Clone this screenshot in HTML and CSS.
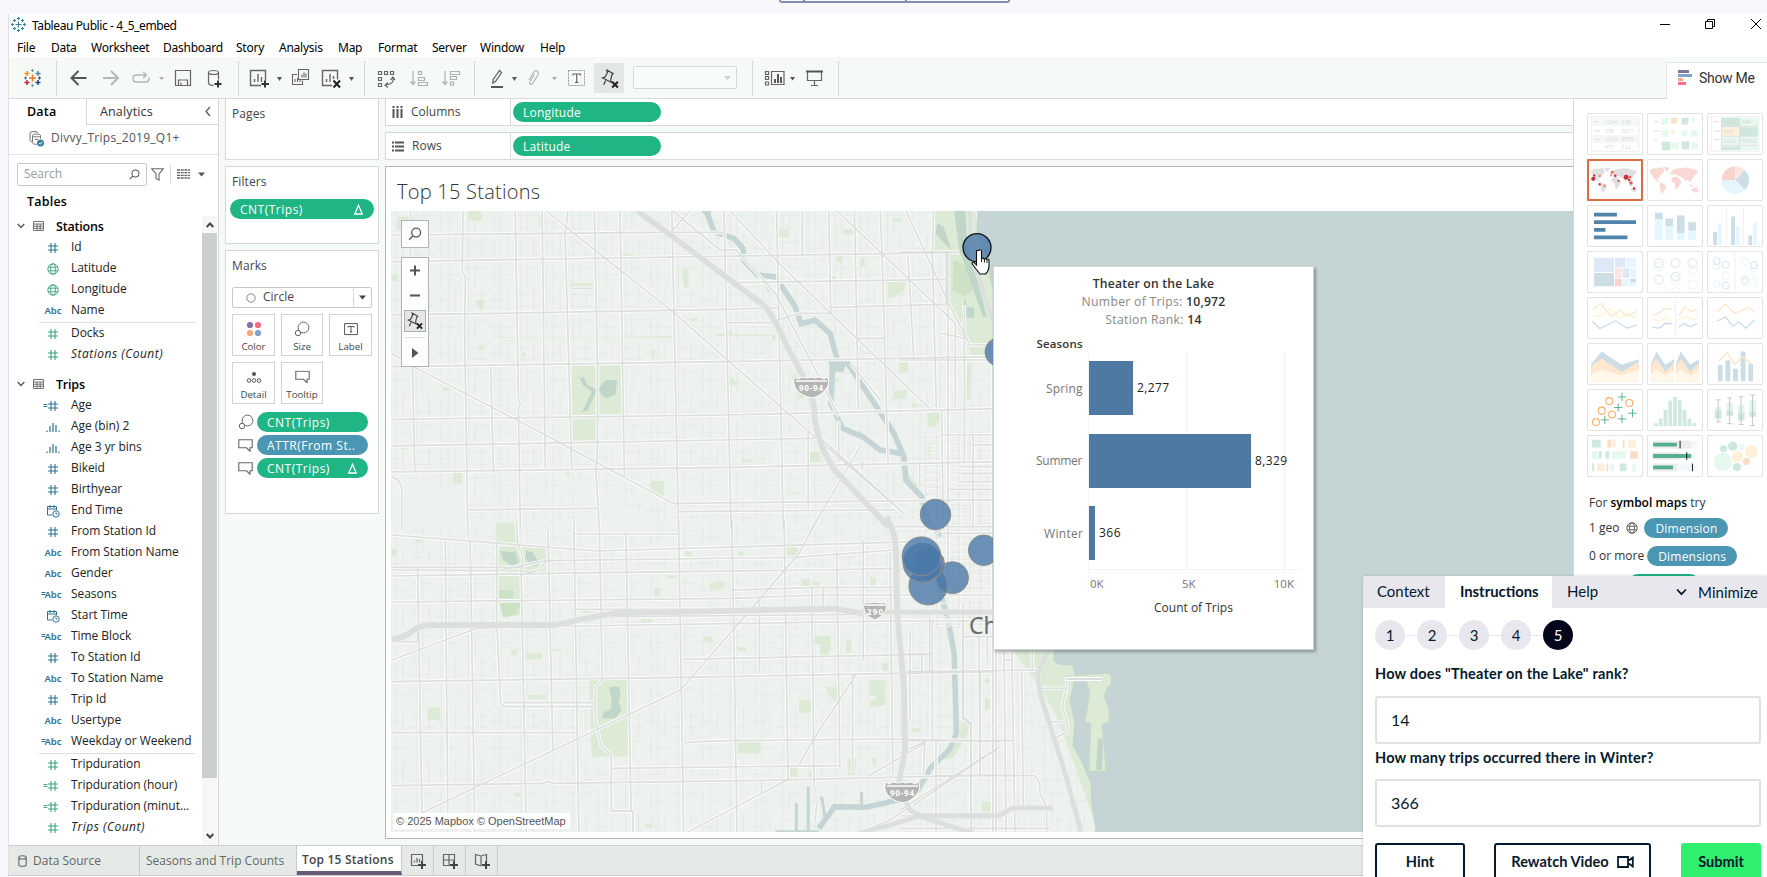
FILE: index.html
```html
<!DOCTYPE html>
<html lang="en">
<head>
<meta charset="utf-8">
<title>Tableau Public - 4_5_embed</title>
<link rel="stylesheet" href="styles.css">
</head>
<body>
<svg class="defs" width="0" height="0">
  <symbol id="hash" viewBox="0 0 12 12"><path d="M4 1v10M8 1v10M1 4h10M1 8h10" fill="none" stroke="currentColor" stroke-width="1.1"/></symbol>
  <symbol id="globe" viewBox="0 0 12 12"><g fill="none" stroke="currentColor" stroke-width=".9"><circle cx="6" cy="6" r="5.2"/><ellipse cx="6" cy="6" rx="2.4" ry="5.2"/><path d="M1 4.2h10M1 7.8h10"/></g></symbol>
  <symbol id="bin" viewBox="0 0 14 12"><path d="M1 11V9.5M4 11V5M7 11V2M10 11V4M13 11V9.5" fill="none" stroke="currentColor" stroke-width="1.2"/></symbol>
  <symbol id="cal" viewBox="0 0 14 14"><g fill="none" stroke="currentColor"><path d="M6 11H1.5V2.5h9V6M1.5 5h9M4 1v3M8 1v3"/><circle cx="10" cy="10" r="3.2"/><path d="M10 8.3V10h1.4"/></g></symbol>
  <symbol id="tbl" viewBox="0 0 11 10"><path d="M.5.5h10v9H.5zM.5 3h10M.5 5.2h10M.5 7.3h10M4 3v6.5M7.2 3v6.5" fill="none" stroke="#666" stroke-width=".9"/></symbol>
  <symbol id="chev" viewBox="0 0 8 6"><path d="M.7 1L4 4.5 7.3 1" fill="none" stroke="#555" stroke-width="1.3"/></symbol>
  <symbol id="drop" viewBox="0 0 7 5"><path d="M0 .5h7L3.500 4.500z" fill="currentColor"/></symbol>
  <symbol id="mag" viewBox="0 0 12 12"><circle cx="7" cy="4.800" r="3.800" fill="none" stroke="currentColor" stroke-width="1.1"/><path d="M4.300 7.600L1 11" stroke="currentColor" stroke-width="1.200"/></symbol>
  <symbol id="size" viewBox="0 0 16 16"><circle cx="9.500" cy="6.500" r="5.400" fill="none" stroke="#666"/><circle cx="4" cy="12" r="2.700" fill="#fff" stroke="#666"/></symbol>
  <symbol id="tip" viewBox="0 0 15 13"><path d="M.8.8h13.400v8H12v3.400L8.500 8.800H.8z" fill="none" stroke="#666" stroke-width="1.100"/></symbol>
  <symbol id="delta" viewBox="0 0 9 11"><path d="M4.500 1.200L8.200 10H.8z" fill="none" stroke="#fff" stroke-width="1.300"/></symbol>
  <symbol id="pin" viewBox="0 0 18 19"><path d="M6 1l6 3.500-1.300 1.200-1 4.500 .5 2.500L2 8.500l2.300-.8L6.500 3.500zM4.800 11L3 15" fill="none" stroke="#444" stroke-width="1.200"/><path d="M11 12l5.500 5.500M16.500 12L11 17.500" stroke="#222" stroke-width="2"/></symbol>
  <symbol id="plus" viewBox="0 0 8 8"><path d="M4 0v8M0 4h8" stroke="#444" stroke-width="2"/></symbol>
</svg>
<div class="embed-stub"><i></i><i></i><i></i></div>

<div class="window">
  <header class="titlebar">
    <svg class="logo" width="15" height="15" viewBox="0 0 15 15"><path d="M7.500 4.500v6M4.500 7.500h6M7.500 0v3M6 1.500h3M7.500 12v3M6 13.500h3M1.500 6v3M0 7.500h3M13.500 6v3M12 7.500h3M3.500 2v3M2 3.500h3M11.500 2v3M10 3.500h3M3.500 10v3M2 11.500h3M11.500 10v3M10 11.500h3" stroke="#3a7ea5" stroke-width="1.100"/></svg>
    <span class="title">Tableau Public - 4_5_embed</span>
    <svg class="winctl" width="112" height="24" viewBox="1655 14 112 24"><path d="M1660 24.500h10" stroke="#000" fill="none"/><path d="M1705.500 21.500h7v7h-7zM1707.500 21v-1.500h7v7H1713" stroke="#000" fill="none"/><path d="M1751 19l10 10M1761 19l-10 10" stroke="#000" fill="none"/></svg>
  </header>
  <nav class="menu"><span class="m1">File</span><span class="m2">Data</span><span class="m3">Worksheet</span><span class="m4">Dashboard</span><span class="m5">Story</span><span class="m6">Analysis</span><span class="m7">Map</span><span class="m8">Format</span><span class="m9">Server</span><span class="m10">Window</span><span class="m11">Help</span></nav>

  <div class="toolbar">
    <svg width="840" height="41" viewBox="9 57 840 41">
      <path d="M56.500 61v35M238.500 61v35M364.500 61v35M474.500 61v35M752.500 61v35M838.500 61v35" stroke="#d5dad7"/>
      <g stroke-width="1.500" fill="none"><path d="M32.500 74.500v7M29 78h7" stroke="#e8762c"/><path d="M27 71v5M24.500 73.500h5" stroke="#eb912c"/><path d="M38 71v5M35.500 73.500h5" stroke="#59879b"/><path d="M27 80v5M24.500 82.500h5" stroke="#c72035"/><path d="M38 80v5M35.500 82.500h5" stroke="#1f447e"/><path d="M32.500 69v3M31 70.500h3M32.500 84v3M31 85.500h3" stroke="#7199a6" stroke-width="1"/><path d="M25.500 76.500v3M24 78h3" stroke="#5b6591" stroke-width="1"/><path d="M39.500 76.500v3M38 78h3" stroke="#1f447e" stroke-width="1"/></g>
      <path d="M86.500 78H72M78.500 71l-7 7 7 7" fill="none" stroke="#555" stroke-width="2"/>
      <path d="M103 78h14.500M111 71l7 7-7 7" fill="none" stroke="#b5b9b6" stroke-width="2"/>
      <path d="M146 75h-10q-3 0-3 3.500t3 3.500h10q3 0 3-3.500v-1M143 72l3.500 3-3.500 3" fill="none" stroke="#b5b9b6" stroke-width="1.500"/>
      <path d="M159 77h5l-2.500 3z" fill="#aaa"/>
      <path d="M175.500 70.500h15v15h-15zM178.500 85v-5h9v5M181 85v-2.500" fill="none" stroke="#666" stroke-width="1.200"/>
      <path d="M208.500 72.500v11q1 2 5 2M218.500 72.500v7" fill="none" stroke="#666" stroke-width="1.200"/><ellipse cx="213.500" cy="72.500" rx="5" ry="2" fill="none" stroke="#666" stroke-width="1.200"/><path d="M218 80.500v7M214.500 84h7" stroke="#333" stroke-width="2"/>
      <path d="M261 85.500h-10.500v-15h15v10M254.500 82v-3M258 82v-8M261.500 82v-5" fill="none" stroke="#666" stroke-width="1.400"/><path d="M265 80.500v7M261.500 84h7.500" stroke="#333" stroke-width="2"/>
      <path d="M277 77h5l-2.500 4z" fill="#555"/>
      <path d="M298.500 69.500h10v10h-10zM297 74.500h-4.500v10h10v-4M302 77.500v-3M304 77.500v-5M306 77.500v-4M295 82v-3M297.500 82v-4M300 82v-2" fill="none" stroke="#666" stroke-width="1.100"/>
      <path d="M332 85.500h-9.500v-15h15v9M326.500 82v-3M330 82v-8M333.500 79v-3" fill="none" stroke="#666" stroke-width="1.400"/><path d="M333.500 80.500l6.500 7M340 80.500l-6.500 7" stroke="#222" stroke-width="2"/>
      <path d="M349 77h5l-2.500 4z" fill="#555"/>
      <path d="M378.500 71.500h3v3h-3zM384.500 71.500h3v3h-3zM390.500 71.500h3v3h-3zM378.500 77.500h3v3h-3zM378.500 83.500h3v3h-3zM393 77.500q2 6-7 7.500M390.500 80l2.500-3 2 3M388 82.500l-3 2.700 3 2.300" fill="none" stroke="#666" stroke-width="1.200"/>
      <g fill="none" stroke="#aeb2af" stroke-width="1.200"><path d="M413 71v13M410.500 81.500L413 84.500l2.500-3M418.500 71.500h3v3h-3zM418.500 77.500h6v3h-6zM418.500 82.500h9v3h-9z"/><path d="M445 71v13M442.500 81.500L445 84.500l2.500-3M450.500 71.500h9v3h-9zM450.500 76.500h6v3h-6zM450.500 82h3v3h-3z"/></g>
      <path d="M499.500 70.500l2 2-6 9-2.800 1.500.5-3.500z" fill="none" stroke="#666" stroke-width="1.300"/><path d="M491 87h12" stroke="#555" stroke-width="2"/>
      <path d="M512 77h5l-2.500 4z" fill="#555"/>
      <path d="M529 80l5-8q2-2 3.500-.5t.5 3.500l-5.500 8.500q-1.500 1.500-2.500.5t0-2.500l4.500-7" fill="none" stroke="#b5b9b6" stroke-width="1.200"/>
      <path d="M552 77h5l-2.500 3z" fill="#aaa"/>
      <rect x="568.500" y="70.500" width="16" height="15" fill="none" stroke="#999" stroke-dasharray="2 1"/><path d="M573 75.500v-1.500h7.500v1.500M576.700 74v8.500M575 82.500h3.500" stroke="#666" fill="none" stroke-width="1.200"/>
      <rect x="594" y="63" width="30" height="30" fill="#e3e8e5"/><use href="#pin" x="600" y="69" width="20" height="20"/>
      <rect x="633.500" y="66.500" width="103" height="22" rx="1" fill="#f7fbf9" stroke="#d5dad7"/><path d="M724 76h7l-3.500 4z" fill="#cfd3d0"/>
      <path d="M771.500 71.500h12.500v13h-12.500zM765.500 71.500h3v3h-3zM765.500 76.500h3v3h-3zM765.500 82h3v3h-3z" fill="none" stroke="#666" stroke-width="1.200"/><path d="M775 83v-4M778 83v-9M781 83v-6" stroke="#555" stroke-width="2"/>
      <path d="M790 77h5l-2.500 3.500z" fill="#555"/>
      <path d="M806 71.500h17" stroke="#555" stroke-width="2"/><path d="M807.500 72v8.500h14V72M814.500 81v4.500M811 85.500h7" fill="none" stroke="#666" stroke-width="1.200"/>
    </svg>
    <div class="showme-tab"><svg width="15" height="16" viewBox="0 0 15 16"><path d="M0 1.500h11" stroke="#85749a" stroke-width="3"/><path d="M0 5.500h14" stroke="#7fa3cf" stroke-width="3"/><path d="M0 9.500h5" stroke="#f9a880" stroke-width="3"/><path d="M0 13.500h8" stroke="#f87184" stroke-width="3"/></svg><span>Show Me</span></div>
  </div>

  <main class="body">
    <aside class="side">
      <div class="tabs"><b>Data</b><span>Analytics<svg width="6" height="11" viewBox="0 0 6 11"><path d="M5 1L1 5.500 5 10" fill="none" stroke="#555" stroke-width="1.200"/></svg></span></div>
      <div class="source"><svg width="17" height="17" viewBox="0 0 17 17"><path d="M2 3v7q0 1.500 2 1.800M2 3q0-1.500 4-1.500T10 3M4.500 5.500v7q0 2 4 2M4.500 5.500q0-1.500 4-1.500t4 1.500v3M4.500 5.500q0 1.500 4 1.500t4-1.500M7 9.500h3" fill="none" stroke="#777"/><circle cx="12.500" cy="13" r="3.500" fill="#3c7fa5"/><path d="M11 13l1.200 1.200 2-2.200" fill="none" stroke="#fff"/></svg><span>Divvy_Trips_2019_Q1+</span></div>
      <div class="searchrow"><div class="search"><span>Search</span><svg width="11" height="11"><use href="#mag"/></svg></div>
        <svg class="funnel" width="13" height="13" viewBox="0 0 13 13"><path d="M.8.8h11.400L8 6v6L5 10.500V6z" fill="none" stroke="#666" stroke-width="1.100"/></svg><i></i>
        <svg width="13" height="10" viewBox="0 0 13 10"><path d="M0 1h13M0 3.700h13M0 6.300h13M0 9h13" stroke="#666" stroke-dasharray="3 .7" stroke-width="1.300"/></svg><svg class="dd" width="7" height="5"><use href="#drop"/></svg></div>
      <h2>Tables</h2>
      <div class="scrollarea">
        <div class="list">
          <div class="group"><svg width="8" height="6"><use href="#chev"/></svg><svg width="11" height="10"><use href="#tbl"/></svg><b>Stations</b></div>
          <div class="f d"><i><svg width="12" height="12"><use href="#hash"/></svg></i>Id</div>
          <div class="f g"><i><svg width="12" height="12"><use href="#globe"/></svg></i>Latitude</div>
          <div class="f g"><i><svg width="12" height="12"><use href="#globe"/></svg></i>Longitude</div>
          <div class="f d"><i>Abc</i>Name</div>
          <hr>
          <div class="f g"><i><svg width="12" height="12"><use href="#hash"/></svg></i>Docks</div>
          <div class="f g"><i><svg width="12" height="12"><use href="#hash"/></svg></i><em>Stations (Count)</em></div>
          <div class="group second"><svg width="8" height="6"><use href="#chev"/></svg><svg width="11" height="10"><use href="#tbl"/></svg><b>Trips</b></div>
          <div class="f d c"><i><svg width="12" height="12"><use href="#hash"/></svg></i>Age</div>
          <div class="f d"><i><svg width="14" height="12"><use href="#bin"/></svg></i>Age (bin) 2</div>
          <div class="f d"><i><svg width="14" height="12"><use href="#bin"/></svg></i>Age 3 yr bins</div>
          <div class="f d"><i><svg width="12" height="12"><use href="#hash"/></svg></i>Bikeid</div>
          <div class="f d"><i><svg width="12" height="12"><use href="#hash"/></svg></i>Birthyear</div>
          <div class="f d"><i><svg width="14" height="14"><use href="#cal"/></svg></i>End Time</div>
          <div class="f d"><i><svg width="12" height="12"><use href="#hash"/></svg></i>From Station Id</div>
          <div class="f d"><i>Abc</i>From Station Name</div>
          <div class="f d"><i>Abc</i>Gender</div>
          <div class="f d c w"><i>Abc</i>Seasons</div>
          <div class="f d"><i><svg width="14" height="14"><use href="#cal"/></svg></i>Start Time</div>
          <div class="f d c w"><i>Abc</i>Time Block</div>
          <div class="f d"><i><svg width="12" height="12"><use href="#hash"/></svg></i>To Station Id</div>
          <div class="f d"><i>Abc</i>To Station Name</div>
          <div class="f d"><i><svg width="12" height="12"><use href="#hash"/></svg></i>Trip Id</div>
          <div class="f d"><i>Abc</i>Usertype</div>
          <div class="f d c w"><i>Abc</i>Weekday or Weekend</div>
          <hr>
          <div class="f g"><i><svg width="12" height="12"><use href="#hash"/></svg></i>Tripduration</div>
          <div class="f g c"><i><svg width="12" height="12"><use href="#hash"/></svg></i>Tripduration (hour)</div>
          <div class="f g c"><i><svg width="12" height="12"><use href="#hash"/></svg></i>Tripduration (minut...</div>
          <div class="f g"><i><svg width="12" height="12"><use href="#hash"/></svg></i><em>Trips (Count)</em></div>
        </div>
        <div class="scroll"><svg width="8" height="6" viewBox="0 0 8 6"><path d="M.7 5L4 1.500 7.300 5" fill="none" stroke="#444" stroke-width="2"/></svg><div class="thumb"></div><svg width="8" height="6" viewBox="0 0 8 6"><path d="M.7 1L4 4.500 7.300 1" fill="none" stroke="#444" stroke-width="2"/></svg></div>
      </div>
    </aside>

    <section class="cards">
      <div class="card pages"><h3>Pages</h3></div>
      <div class="card filters"><h3>Filters</h3><div class="pill green">CNT(Trips)<svg width="9" height="11"><use href="#delta"/></svg></div></div>
      <div class="card marks"><h3>Marks</h3>
        <div class="select"><svg width="10" height="10" viewBox="0 0 10 10"><circle cx="5" cy="5" r="4.200" fill="none" stroke="#888"/></svg><span>Circle</span><i><svg width="7" height="5"><use href="#drop"/></svg></i></div>
        <div class="buttons">
          <div><svg width="16" height="16" viewBox="0 0 16 16"><circle cx="4" cy="4" r="3.100" fill="#85719a"/><circle cx="12" cy="4" r="3.100" fill="#f8697f"/><circle cx="4" cy="12" r="3.100" fill="#f9a77b"/><circle cx="12" cy="12" r="3.100" fill="#7fa3cf"/></svg>Color</div>
          <div><svg width="16" height="16"><use href="#size"/></svg>Size</div>
          <div><svg width="14" height="16" viewBox="0 0 14 16"><path d="M.6 2.600h12.800v11H.600zM4 6.500V5.500h6v1M7 5.500V11M5.800 11h2.400" fill="none" stroke="#555"/></svg>Label</div>
          <div><svg width="16" height="16" viewBox="0 0 16 16"><circle cx="8" cy="5" r="2" fill="#555"/><g fill="none" stroke="#555"><circle cx="3" cy="11.500" r="1.800"/><circle cx="8" cy="11.500" r="1.800"/><circle cx="13" cy="11.500" r="1.800"/></g></svg>Detail</div>
          <div><svg width="15" height="16" viewBox="0 -1.500 15 16"><use href="#tip" width="15" height="13"/></svg>Tooltip</div>
        </div>
        <div class="mrow"><svg width="16" height="16"><use href="#size"/></svg><div class="pill green">CNT(Trips)</div></div>
        <div class="mrow"><svg width="15" height="13"><use href="#tip"/></svg><div class="pill blue">ATTR(From St..</div></div>
        <div class="mrow"><svg width="15" height="13"><use href="#tip"/></svg><div class="pill green">CNT(Trips)<svg width="9" height="11"><use href="#delta"/></svg></div></div>
      </div>
    </section>

    <section class="work">
      <div class="shelf"><label><svg width="11" height="12" viewBox="0 0 11 12"><path d="M1.500 0v2M5.500 0v2M9.500 0v2M1.500 3v9M5.500 3v9M9.500 3v9" stroke="#555" stroke-width="2"/></svg>Columns</label><div class="pill green">Longitude</div></div>
      <div class="shelf"><label><svg width="12" height="11" viewBox="0 0 12 11"><path d="M0 1.500h2M0 5.500h2M0 9.500h2M3 1.500h9M3 5.500h9M3 9.500h9" stroke="#555" stroke-width="2"/></svg>Rows</label><div class="pill green">Latitude</div></div>
      <div class="view">
        <h1>Top 15 Stations</h1>
        <div class="map">
          <svg class="mapsvg" width="1182" height="621" viewBox="391 211 1182 621">
            <defs>
              <pattern id="minor" width="52.400" height="52.600" patternUnits="userSpaceOnUse" x="383" y="209"><path d="M6 0V26M13 0V52M20 26V52M33 0V52M39.500 0V26M46 26V52M6 30V48M0 13H26M26 6H52M26 19H40M0 39H20M30 33H52M26 45H52" fill="none" stroke="#e3e9e6" stroke-width=".9"/><path d="M9 2V24M17 28V50M36 2V24M43 28V50" stroke="#f3f1f0" stroke-width="1"/></pattern>
              <pattern id="dense" width="11" height="7.200" patternUnits="userSpaceOnUse" x="925" y="436"><path d="M0 1H11M1 0V8" fill="none" stroke="#fff" stroke-width="3"/><path d="M0 1H11M1 0V8" fill="none" stroke="#dbdfdc" stroke-width="1.300"/></pattern>
              <g id="roads" fill="none" stroke-linejoin="round">
                <g transform="translate(380 190) scale(.3954 .3333)">
                  <path class="r" d="M30 135L700 127H870M30 215L1465 187M880 278L1430 268M30 374L300 370 870 358 1005 353M1140 352L1430 343M880 398H1005M30 530L870 515 1550 500M30 688L870 675 1568 656M30 768L1100 745M30 846L880 832 1568 815M220 960L550 955M740 940L1550 930M755 965L1300 960M485 295H540M1205 445H1275M1425 735H1550M1500 765H1550"/>
                  <path class="r" d="M77 62V200M82 530L88 845M210 62L208 240 216 262 214 420 222 1020M280 530L287 845M342 62L350 625 355 645 350 660 355 1020M410 62L418 835M475 62L472 100 468 125 485 835M542 62L550 520 550 780 546 840 555 1020M607 62L618 860M738 62L755 1020M870 62L888 1020M1003 62L1020 1020M1068 62V195M1135 62L1140 370M1200 62L1210 660M1265 62L1270 200 1285 815M1335 200L1350 500M1400 62L1397 190 1407 655M1432 190V345M1478 345V815M1500 735V1020M1420 660L1425 1020M1083 725V955M1160 690V815M1365 815V880M1550 500V1020M1455 400V650M1220 815V840"/>
                  <path class="r" d="M420 62L485 125 740 365 1080 720 1325 970M30 490L85 530 410 730 740 940M740 62L860 180H900L1000 310 1110 560 1160 680M885 62L1005 215 1140 370 1390 655M1155 62L1455 400M1330 62L1440 345 1490 460M1090 1020L1215 770M785 62L740 120M1005 390L1060 370H1140M1110 740L1325 970M30 860Q55 870 55 900V1020M1460 830H1550M1460 850H1550M1460 875H1550M1440 898H1550M1190 520L1265 630"/>
                </g>
                <g transform="translate(380 520) scale(.3954 .3333)">
                  <path class="r" d="M30 45L550 93 1360 65M490 42H755M30 142H360M30 150L300 152 420 122 1050 112 1300 90M30 168L550 158 1120 150 1300 145M30 246L890 235 1120 225H1550M890 210L1120 202H1300M30 485L760 472 1560 455M305 545Q305 560 325 560H540V548H315M30 638H500M770 670Q780 664 890 662L1290 657 1568 664M585 745L1160 737M30 797L410 790 425 785 440 790 1030 780 1560 765M765 418L1390 403M500 318L1300 303H1550M30 365H95L95 325M590 290L1220 283M490 268H890M360 318H500M1300 20H1550M1420 40H1550"/>
                  <path class="r" d="M95 140L107 937M165 60L172 937M228 60L240 937M295 60V300L305 545M345 0L348 70 362 115 357 150 370 937M425 30L437 690M490 0L503 937M555 30L562 480 545 500V600L560 680 585 705V873H640V937M622 40L635 870M755 0L768 937M890 0L903 937M1022 0L1032 780M1092 200L1098 800M1155 90L1163 740M1222 60V420M1290 100L1297 760M1195 462V760M965 780V820M960 235V460M1120 202V280M360 152L380 157 400 150 420 125"/>
                  <path class="r" d="M30 420L245 325 480 312M95 885L440 690 760 510 940 265 1060 100 1105 0M1205 462L1095 660 1060 735M780 935L1030 780M1235 768L1380 668M1350 855L1568 680M1340 860L1290 900 1220 935M1340 330V600M1370 400V460M1390 270V455M1475 250V590L1495 610V937M1518 455V765M1550 0V937M1100 905L1105 850"/>
                </g>
                <g transform="translate(900 580) scale(.3333)">
                  <path class="r" d="M20 275L420 270M20 482H340M110 587H400Q420 590 420 640L440 680V757M0 745H450M97 120V480M188 120V415L212 435 214 757M237 170L240 585M262 170V250M288 190V757M312 190L318 757M335 190L345 757M365 275L370 680M397 190V270M0 520L80 482M0 690L285 510M420 325H500M440 425H500M605 292H500V320L487 380 502 430V455L465 475M0 708H40M0 222H97M70 585L75 480M190 170H280M310 240H340M108 480V757"/>
                </g>
                <path class="r" d="M900 252L953 252M968 345H993M940 333L968 339M948 252V575M900 360H993"/>
              </g>
              <g id="hwy" fill="none" stroke-linejoin="round">
                <g transform="translate(380 190) scale(.3954 .3333)"><path class="h" d="M650 62L740 140 975 350Q1000 390 1030 470L1070 560Q1100 620 1100 690 1110 770 1150 840L1285 1010"/></g>
                <g transform="translate(380 520) scale(.3954 .3333)"><path class="h" d="M30 358Q60 355 80 335T130 315H440Q480 308 500 300L590 280 890 272 1150 266 1220 280M1280 -10Q1305 40 1305 90L1308 280 1325 500 1328 690 1312 790"/><path class="h h2" d="M1220 277H1560M1320 820L1340 870 1365 887H1570M1360 890L1290 915 1210 940M1360 887L1500 940"/></g>
                <path class="h h2" d="M970 211V250L980 280 993 322M1049 650L1038 672Q1037 680 1042 700L1066 776 1081 832M1053 808H1013L998 816H913"/>
              </g>
            </defs>
            <rect x="391" y="211" width="1182" height="621" fill="#edf2ef"/>
            <rect x="391" y="211" width="700" height="621" fill="url(#minor)"/>
            <path d="M391 480h30l40 16v30h-70zM570 478l60 30 26 10v18h-70z" fill="#edf2ef"/>
            <g transform="translate(380 190) scale(.3954 .3333)">
              <path fill="#dcead6" d="M45 80h40v40H45zM225 62h33v30h-33zM402 82h8v25h-8zM240 330h24l-6 35zM30 255h15v18H30zM485 525l60 2v148h-60zM552 527l60-2v147h-60zM487 685h60v67h-60zM610 192h30v8h-30zM762 238h18v55h-10zM480 280h60v12h-60zM685 873h33v45h-20l-13-18zM185 845h22v35h-22zM293 998h52v22h-52zM1008 120h25v22h-25zM1172 117h25v16h-25zM1297 85h22v10h-22zM1285 275h45l-5 28-28 20h-12zM1215 205h12v25h-12zM1155 198h15v18h-15zM1140 258h12v8h-12zM785 385h18v8h-18zM882 555l30 30h-30zM1040 555l15 0 20 30v40h-15zM1313 518h22v28h-22zM1300 605l32-5v22l-37 8zM1385 670l30-7v28l-15 20h-15zM1085 785h28v32h-28zM915 808h28v8h-28zM1040 905h20v6h-20zM250 465h15v14h-15zM360 487h8v14h-8zM688 480h7v25h-7zM160 590h15v14h-15zM970 290h15v20zM1485 520l10 0-2 110-10-5zM1387 767h5v38h-5zM1335 850l28 40h-22zM52 770h18v6H52zM470 842h10v12h-10zM1345 640h14v12h-14zM1145 565h16v12h-16zM300 437l15 4 230 1 200-4v5H300zM880 422h10v12h110v18h-8v-14H850v-5h30z"/>
              <path fill="#dcead6" d="M1400 62H1505L1515 130 1552 200V495H1497L1455 400 1436 330V190L1400 185z"/>
              <path fill="#cde2c5" d="M1450 210L1490 230 1500 300 1480 320 1448 300z"/>
              <path fill="#bfd6c9" d="M1452 62H1480L1485 150 1535 380H1525L1465 180zM1410 100L1425 110 1445 180 1420 150 1405 130zM1480 325l5 25 18 5v28l-32 0zM505 565l10-5 10 25 25 15 20-30 30 0-5 45-25 10-20-25-25 60-15 10 25-65-22-20z"/>
              <g fill="none" stroke="#c5d4d5" class="nv"><path stroke-width="5.500" d="M825 62L845 125 895 145 918 175 920 210 955 255 1000 260 1050 350 1065 402 1100 390 1138 430 1158 515M1145 520L1140 640 1170 715 1220 740 1265 780 1325 792M1180 515L1250 640 1300 730 1325 800 1330 870 1370 920 1390 1020"/></g>
              <path fill="#c5d4d5" d="M1133 513H1182L1172 545H1142zM812 62H838L834 95zM1442 1003h25v12h-25zM1475 1003h15v12h-15zM1498 1003h15v12h-15zM1520 1003h10v12h-10zM1535 1003h10v12h-10z"/>
            </g>
            <g transform="translate(380 520) scale(.3954 .3333)">
              <path fill="#dcead6" d="M293 10h52v65l-50-4zM293 80l60 0 65 3v74H300zM298 160h57v125l-42 8-12-50zM530 480L628 476V710H535zM903 665h60v35h-60zM1027 70h12l24 25-15 25-20-5zM1238 480h40v75l-20 5h-20v-20h15v-15h-15zM1060 540h30v38h-30zM1130 502h26v36h-10l-16-20zM120 562h32v38h-32zM1095 348h45v22l-5 35h-22v-33h-18zM1178 358h14v40h-14zM1270 430h14v22h-14zM1185 715h20l-5 50h-15zM1345 625h20v12h-20zM1240 715h14v25zM1037 745h18v25h-18zM1522 845h22v30h-22zM1085 753h10v18h-10zM30 87h12v22H30zM92 57h12v10H92zM375 524h45v12h-45zM368 400h42v18h-42zM332 390h14v16h-14zM660 298h27v10h-27zM817 350h24v14h-24zM905 382h22v10h-22zM834 192l18-8h20v14l-15 10h-22zM1067 178h20v20h-20zM1092 185h18v12h-18zM1240 172h14v24h-14zM693 205h14v24h-14zM725 166h25v9h-25zM772 94h17v14h-17zM905 95h16v12h-16zM430 388h30v6h-30zM340 818h14v12h-14zM670 912h17v10h-17zM510 273h30v6h-30zM1470 608h22v20l-20 45-25 45-22 0 40-60zM1530 475h10v15h-10zM1530 535h12v35h-12zM1410 30h20v22h-20z"/>
              <path fill="#cde2c5" d="M298 210h40v25h-40zM302 248h55l-10 35-35 8z"/>
              <path fill="#bfd6c9" d="M305 92l25 6 12-5 8 35-18 10-22-20zM370 92l15 5 15 25 0 15-15 0-18-20zM580 500l25 0 3 25-5 20 8 25-15 25-35 0 5-18 18-8 2-25z"/>
              <g fill="none" stroke="#c5d4d5" class="nv"><path stroke-width="5.500" d="M1405 20L1415 50M1412 200L1435 290 1452 400 1458 640 1440 690 1395 740 1360 810 1330 835 1230 862 1150 860 1110 925"/><path stroke-width="3" d="M1053 850V935M1083 800V935M1117 830L1125 890M1218 815V860M1000 935H1110"/></g>
            </g>
            <path fill="#dcead6" d="M1013 650h52l5 15 14 0 5 14-6 20 6 28-4 18 12 18 8 20 2 28 4 10-3 12h-10l-24-70-18-48-16-28z"/>
            <rect x="925" y="436" width="68" height="130" fill="url(#dense)" opacity=".75"/>
            <rect x="936" y="566" width="57" height="62" fill="url(#dense)" opacity=".75"/>
            <use href="#roads" class="casing"/><use href="#roads" class="core"/>
            <use href="#hwy" class="casing"/><use href="#hwy" class="core"/>
            <path fill="#c5d4d5" stroke="#bcd3c6" stroke-width=".8" d="M978 210L977 232 985 252 993 290V600H1054V661L1058 664 1073 665 1075 676 1072 692 1070 700 1075 723 1073 745 1082 762 1091 783 1092 806 1096 828 1095 833H1575V210z"/>
            <path fill="#dcead6" stroke="#c4dcc0" stroke-width=".7" d="M1065 676l38-2 2-1 6 2v10l-4 3-3 9 5 12v12l-7 4 4 46h-17l2-48-6-1 5-30-4-12z"/>
            <path d="M1066 679H1102" stroke="#fff" stroke-width="4"/><path d="M1066 679H1102" stroke="#d9deda" stroke-width="2"/>
            <path fill="#bfd6c9" d="M1098 738l5 2-1 30-6 0z"/>
            <g id="sh"><path fill="#b4b5b4" stroke="#fff" d="M795 377l3 2 4-2 5 1 4-1 4 1 5-1 4 2 3-2q4 6-1 12-5 7-14 9-11-2-16-9-4-6-1-12z"/><path d="M796 381H827" stroke="#fff" stroke-width="1.500"/><text x="811" y="390.500" textLength="24">90-94</text></g>
            <use href="#sh" x="91" y="405"/>
            <g><path fill="#b4b5b4" stroke="#fff" d="M865 602l3 1 7-1 7 1 3-1q3 5 0 10-3 5-10 8-8-3-10-8-3-5 0-10z"/><path d="M865 605H885" stroke="#fff" stroke-width="1.500"/><text x="875" y="614.500" textLength="16">290</text></g>
            <text class="city" x="969" y="634">Chicago</text>
            <g fill="#4a78a8" fill-opacity=".8" stroke="#8d8d88" stroke-width="1">
              <circle cx="999.500" cy="352" r="14.500"/><circle cx="935.500" cy="514.500" r="15.300"/><circle cx="983.700" cy="550.300" r="15.300"/><circle cx="952.500" cy="577.700" r="16"/><circle cx="928.200" cy="585.700" r="19.300"/><circle cx="929" cy="564" r="15.500"/><circle cx="922.500" cy="562.800" r="19.500"/><circle cx="921.500" cy="556.300" r="19.400"/>
              <circle cx="977" cy="247.700" r="14" stroke="#111" stroke-width="1.300"/>
            </g>
            <path d="M978.500 250q1.800-1.500 3 0v8q1.500-1 2.500.5 1.800-1 2.800.5 2-.8 2.200 1v6q-.5 5-3.500 7.500h-5.500l-4-5-4-5.500q0-1.500 2-1l2.500 2.500V250z" transform="translate(0 .5)" fill="#fff" stroke="#111" stroke-width="1.100"/>
            <path d="M981.500 258v4M984.500 259v3.500M987 260v3" stroke="#222" fill="none"/>
          </svg>
          <div class="ctl one"><svg width="14" height="14"><use href="#mag"/></svg></div>
          <div class="ctl two"><svg width="28" height="109" viewBox="0 0 28 109"><path d="M9 13.500h10M14 8.500v10M9 38.500h10" stroke="#555" stroke-width="2"/><rect x="3.500" y="53.500" width="21" height="21" fill="#e3e8e5" stroke="#aaafac"/><use href="#pin" x="5" y="55" width="18" height="18"/><path d="M4 80.500h20" stroke="#dde1de"/><path d="M11 91v10l6.500-5z" fill="#555"/></svg></div>
          <div class="attrib">© 2025 Mapbox © OpenStreetMap</div>
          <div class="tooltip">
            <div class="tt"><b>Theater on the Lake</b><br><span class="w2">Number of Trips: <b>10,972</b></span><br>Station Rank: <b>14</b></div>
            <svg width="319" height="258" viewBox="994 330 319 258">
              <path d="M1088.500 352V573M1186.500 352V573M1284.500 352V573M1088 569.500H1301" stroke="#f0f4f3" fill="none"/>
              <path fill="#4e79a2" d="M1089 361h44v54h-44zM1089 434h162v54h-162zM1089 506h6v54h-6z"/>
              <g class="lab"><text class="dk" x="1036.500" y="348" textLength="46">Seasons</text><text x="1046" y="393" textLength="36.500">Spring</text><text x="1036" y="465" textLength="46.500">Summer</text><text x="1044" y="538" textLength="39">Winter</text>
              <text class="bk" x="1137" y="392" textLength="32">2,277</text><text class="bk" x="1255" y="465" textLength="32">8,329</text><text class="bk" x="1099" y="537" textLength="21.500">366</text></g>
            </svg>
            <div class="axis"><span>0K</span><span>5K</span><span>10K</span></div>
            <div class="axtitle">Count of Trips</div>
          </div>
        </div>
      </div>
    </section>

    <aside class="showme">
      <div class="grid">
        <svg viewBox="0 0 168 126"><rect x="9" y="9" width="150" height="108" fill="#fff" stroke="#ececec" stroke-width="3"/><path d="M12 12h144v26H12zM12 66h144v26H12z" fill="#f5f9f6"/><path d="M18 24h15M18 53h18M18 80h18" stroke="#e8e8e8" stroke-width="5"/><g class="num"><text x="52" y="31">1234</text><text x="104" y="31">678</text><text x="52" y="59">358</text><text x="104" y="59">3011</text><text x="52" y="85">2620</text><text x="104" y="85">2559</text><text x="52" y="109">471</text><text x="104" y="109">322</text></g></svg>
        <svg viewBox="0 0 168 126"><path d="M18 24h15M18 54h18M18 84h12" stroke="#ececec" stroke-width="5"/><path fill="#e5f9ee" d="M42 12h21v21H42zM135 12h12v12h-12zM42 51h21v21H42zM105 51h18v18h-18zM135 51h20v20h-20zM72 90h24v21H72zM135 90h21v21h-21z"/><path fill="#cfe9df" d="M105 12h21v21h-21zM42 87h27v27H42zM105 87h24v24h-24z"/><path fill="#fde0c5" d="M72 12h18v18H72z"/><path fill="#fff0dc" d="M72 51h12v12H72z"/></svg>
        <svg viewBox="0 0 168 126"><rect x="9" y="9" width="150" height="108" fill="#fff" stroke="#ececec" stroke-width="3"/><path fill="#cfe9df" d="M42 12h57v27H42zM99 42h57v27H99zM42 102h57v12H42z"/><path fill="#e5f9ee" d="M99 12h57v27H99zM42 72h114v27H42zM99 102h57v12H99z"/><path fill="#fff0dc" d="M42 42h57v27H42z"/><path d="M42 12v103M99 12v103M42 40h114M42 70h114M42 100h114" stroke="#dcdcdc" stroke-width="3"/><path d="M18 24h15M18 53h18M18 80h18" stroke="#e8e8e8" stroke-width="5"/><g class="num"><text x="48" y="31">1234</text><text x="105" y="31">546</text><text x="48" y="62">358</text><text x="105" y="62">340</text><text x="48" y="92">2620</text><text x="105" y="92">51890</text></g></svg>
        <svg class="sel" viewBox="0 0 168 126"><g id="world"><path d="M5 33L12 27 30 26 44 22 50 30 46 42 38 48 33 58 26 60 36 70 28 68 18 58 10 46 6 42zM50 22L68 24 60 36 54 34zM36 70L50 76 58 86 50 96 44 108 40 100 36 86zM70 45L72 36 84 28 96 26 120 24 156 32 154 40 146 48 138 60 132 72 126 62 118 68 112 58 100 52 84 46zM74 56L90 52 100 62 104 70 92 90 86 92 82 72 72 66zM128 74l16 10-8 2zM136 92l16-8 6 12-8 8-12-6z"/></g><g fill="#c8303f"><circle cx="12" cy="59" r="7"/><circle cx="15" cy="48" r="4"/><circle cx="121" cy="54" r="8"/><circle cx="85" cy="49" r="4.500"/><circle cx="33" cy="77" r="4"/><circle cx="147" cy="91" r="4"/><circle cx="131" cy="63" r="4"/></g><g fill="#e2605c"><circle cx="75" cy="37" r="4.500"/><circle cx="137" cy="73" r="6"/><circle cx="96" cy="66" r="4"/><circle cx="134" cy="53" r="4"/></g><g fill="#f19a94"><circle cx="34" cy="49" r="5"/><circle cx="50" cy="82" r="5"/><circle cx="71" cy="47" r="4"/></g></svg>
        <svg class="filled" viewBox="0 0 168 126"><use href="#world"/></svg>
        <svg viewBox="0 0 168 126"><path d="M85 63V20A43 43 0 0 0 42 63z" fill="#f7d4ce"/><path d="M85 63V20A43 43 0 0 1 115 32z" fill="#fde4e2"/><path d="M85 63L115 32A43 43 0 0 1 115 94z" fill="#ccdde8"/><path d="M85 63L115 94A43 43 0 0 1 42 63z" fill="#e5f6fe"/></svg>
        <svg viewBox="0 0 168 126"><path fill="#5184aa" d="M18 21h72v12H18zM18 45h132v12H18zM18 69h36v12H18zM18 93h105v12H18z"/></svg>
        <svg viewBox="0 0 168 126"><path fill="#ccdde6" d="M21 21h24v21H21zM54 39h24v24H54zM90 30h24v57H90zM126 51h24v27h-24z"/><path fill="#e5f6fe" d="M21 42h24v66H21zM54 63h24v45H54zM90 87h24v21H90zM126 78h24v30h-24z"/></svg>
        <svg viewBox="0 0 168 126"><path d="M57 3v120M111 3v120" stroke="#e8e8e8" stroke-width="2"/><path fill="#ccdde6" d="M15 81h12v42H15zM72 33h12v90H72zM126 93h12v30h-12z"/><path fill="#e5f6fe" d="M30 54h12v69H30zM87 66h12v57H87zM141 51h12v72h-12z"/></svg>
        <svg viewBox="0 0 168 126"><path fill="#dde9f6" d="M18 18h63v45H18zM84 18h33v30H84zM108 51h21v30h-21z"/><path fill="#ccdde6" d="M18 66h63v42H18zM132 84h18v12h-18z"/><path fill="#fde4e4" d="M84 51h21v30H84z"/><path fill="#f7d4ce" d="M84 84h21v24H84z"/><path fill="#e5f6fe" d="M120 18h30v30h-30zM132 51h18v30h-18zM108 84h21v24h-21zM132 98h18v10h-18z"/></svg>
        <svg viewBox="0 0 168 126"><g fill="none" stroke="#ccdde6" stroke-width="2.500"><circle cx="33" cy="35" r="14"/><circle cx="33" cy="87" r="14"/><circle cx="86" cy="35" r="14"/><circle cx="86" cy="78" r="14"/><circle cx="139" cy="35" r="14"/></g><g fill="none" stroke="#dff1fb" stroke-width="2.500"><circle cx="33" cy="47" r="14"/><circle cx="86" cy="90" r="14"/><circle cx="139" cy="56" r="14"/><circle cx="139" cy="103" r="14"/><path d="M73 122a13 10 0 0 1 26 0"/></g></svg>
        <svg viewBox="0 0 168 126"><path d="M84 3v120" stroke="#e8e8e8" stroke-width="2"/><g fill="none" stroke="#ccdde6" stroke-width="2.500"><circle cx="26" cy="29" r="11"/><circle cx="55" cy="40" r="11"/><circle cx="55" cy="106" r="11"/><circle cx="144" cy="41" r="11"/><circle cx="115" cy="88" r="11"/></g><g fill="none" stroke="#dff1fb" stroke-width="2.500"><circle cx="26" cy="44" r="11"/><circle cx="55" cy="76" r="11"/><circle cx="26" cy="100" r="11"/><circle cx="115" cy="30" r="11"/><circle cx="144" cy="52" r="11"/><circle cx="144" cy="94" r="11"/><circle cx="115" cy="96" r="11"/></g></svg>
        <svg viewBox="0 0 168 126"><g fill="none" stroke-width="3.500"><path stroke="#fde3c4" d="M15 35L38 17 73 58 102 38 120 58 153 42"/><path stroke="#fdf1cc" d="M15 60L40 55 70 34 100 65 120 48 153 65"/><path stroke="#c5dae6" d="M12 73L36 96 86 72 122 95 153 85"/></g></svg>
        <svg viewBox="0 0 168 126"><path d="M85 3v120" stroke="#e8e8e8" stroke-width="2"/><g fill="none" stroke-width="3.500"><path stroke="#fde3c4" d="M12 55L30 50 50 33 75 36M96 55L115 27 135 42 155 38"/><path stroke="#fdf1cc" d="M12 65L36 74 55 60 75 76M96 68L120 58 140 70 155 62"/><path stroke="#c5dae6" d="M12 92L35 95 52 80 75 81M96 92L112 80 132 90 155 80"/></g></svg>
        <svg viewBox="0 0 168 126"><path d="M9 15h7M9 35h7M9 55h7M9 75h7M9 95h7M9 110h7M153 15h7M153 35h7M153 55h7M153 75h7M153 95h7M153 110h7" stroke="#eee" stroke-width="2"/><g fill="none" stroke-width="3.500"><path stroke="#fde3c4" d="M27 44L54 20 83 48 125 30 145 42"/><path stroke="#c5dae6" d="M27 73L54 60 78 90 95 75 118 95 145 70"/></g></svg>
        <svg viewBox="0 0 168 126"><path fill="#ccdde6" d="M9 63L42 24 105 65 159 48V117H9z"/><path fill="#fde8cf" d="M9 69L42 46 105 88 159 55V117H9z"/><path fill="#fff8e8" d="M9 94L42 80 105 99 159 82V117H9z"/></svg>
        <svg viewBox="0 0 168 126"><path fill="#ccdde6" d="M9 63L25 24 54 65 81 48V117H9zM87 63L102 24 132 65 159 48V117H87z"/><path fill="#fde8cf" d="M9 69L25 46 54 88 81 60V117H9zM87 69L102 46 132 88 159 60V117H87z"/><path fill="#fff8e8" d="M9 94L25 80 54 99 81 82V117H9zM87 94L102 80 132 99 159 82V117H87z"/></svg>
        <svg viewBox="0 0 168 126"><path d="M9 15h7M9 35h7M9 55h7M9 75h7M9 95h7M9 115h7M153 15h7M153 35h7M153 55h7M153 75h7M153 95h7M153 115h7" stroke="#eee" stroke-width="2"/><path fill="#ccdde6" d="M30 66h15v51H30zM54 51h15v66H54zM78 78h15v39H78zM102 24h15v93h-15zM126 63h15v54h-15z"/><path d="M33 54L60 28 84 64 110 40 138 66" fill="none" stroke="#fde3c4" stroke-width="4"/></svg>
        <svg viewBox="0 0 168 126"><g fill="none" stroke="#f9b266" stroke-width="3.500"><circle cx="66" cy="35" r="11"/><circle cx="129" cy="41" r="11"/><circle cx="42" cy="65" r="11"/><circle cx="75" cy="77" r="11"/><circle cx="24" cy="101" r="11"/></g><path d="M106 9v26M93 22h26M94 42v26M81 55h26M139 60v26M126 73h26M106 78v26M93 91h26M52 81v26M39 94h26" stroke="#51b089" stroke-width="3"/></svg>
        <svg viewBox="0 0 168 126"><path fill="#cfe9df" d="M18 105h12v9H18zM33 90h12v24H33zM48 63h12v51H48zM63 33h12v81H63zM78 21h12v93H78zM93 33h12v81H93zM108 63h12v51h-12zM123 90h12v24h-12zM138 105h12v9h-12z"/></svg>
        <svg viewBox="0 0 168 126"><path fill="#e0f7ea" d="M21 54h21v12H21zM57 39h21v27H57zM93 48h21v27H93zM129 33h21v36h-21z"/><path fill="#cfe9df" d="M21 66h21v24H21zM57 66h21v15H57zM93 72h21v24H93zM129 69h21v15h-21z"/><path d="M31 31v69M24 31h15M24 100h15M67 25v81M60 25h15M60 106h15M103 21v88M96 21h15M96 109h15M139 16v96M132 16h15M132 112h15" stroke="#bbb" stroke-width="2.500"/></svg>
        <svg viewBox="0 0 168 126"><path fill="#cfe9df" d="M12 12h27v24H12zM33 48h9v24h-9zM54 48h12v24H54zM12 87h6v24h-6zM99 87h21v24H99z"/><path fill="#fbdcc0" d="M60 12h12v24H60zM108 12h6v24h-6zM132 48h24v24h-24zM57 87h6v24h-6z"/><path fill="#ffeeda" d="M75 12h12v24H75zM126 12h24v24h-24zM27 87h24v24H27z"/><path fill="#e5f9ee" d="M12 48h18v24H12zM75 48h42v24H75zM69 87h12v24H69zM138 87h12v24h-12z"/></svg>
        <svg viewBox="0 0 168 126"><path fill="#f4f8fd" d="M15 15h138v24H15zM15 51h138v24H15zM15 87h138v24H15z"/><path fill="#ececec" d="M15 15h120v24H15zM15 51h87v24H15zM15 87h75v24H15z"/><path fill="#56b08d" d="M15 21h75v12H15zM15 57h120v12H15zM15 93h63v12H15z"/><path d="M100 15v24M121 51v24M139 87v24" stroke="#111" stroke-width="3"/></svg>
        <svg viewBox="0 0 168 126"><g fill="#cfe9df"><circle cx="48" cy="40" r="11"/><circle cx="77" cy="32" r="15"/><circle cx="90" cy="98" r="13"/></g><g fill="#e5f9ee"><circle cx="46" cy="82" r="29"/><circle cx="106" cy="35" r="9"/></g><g fill="#ffeeda"><circle cx="91" cy="65" r="17"/><circle cx="136" cy="49" r="20"/></g><circle cx="120" cy="80" r="11" fill="#fbdcc0"/></svg>
      </div>
      <p>For <b>symbol maps</b> try</p>
      <div class="need">1 geo <svg width="12" height="12"><use href="#globe"/></svg><span class="pill blue p1">Dimension</span></div>
      <div class="need n2">0 or more <span class="pill blue p2">Dimensions</span></div>
      <div class="need n3"><span class="pill green p3">Measures</span></div>
    </aside>
  </main>

  <footer class="sheets">
    <span class="ds"><svg width="9" height="12" viewBox="0 0 9 12"><path d="M.8 2.500v7q0 1.800 3.700 1.800t3.700-1.800v-7M.8 2.500q0-1.800 3.700-1.800t3.700 1.800q0 1.500-3.700 1.500T.8 2.500" fill="none" stroke="#666" stroke-width="1.100"/></svg>Data Source</span><span class="s2">Seasons and Trip Counts</span><span class="s3">Top 15 Stations</span>
    <span class="new"><svg width="16" height="16" viewBox="0 0 16 16"><path d="M8 12.500H1.500v-11h11V8M4.500 9.500v-2M7 9.500V5M9.500 9.500V6" fill="none" stroke="#666" stroke-width="1.200"/><use href="#plus" x="8" y="8" width="8" height="8"/></svg></span><span class="new"><svg width="16" height="16" viewBox="0 0 16 16"><path d="M8 12.500H1.500v-11h11V8M1.500 7h11M7 1.500v11" fill="none" stroke="#666" stroke-width="1.200"/><use href="#plus" x="8" y="8" width="8" height="8"/></svg></span><span class="new"><svg width="16" height="16" viewBox="0 0 16 16"><path d="M7 13L1.500 11V1.500L7 3l5.500-1.500V8M7 3v10" fill="none" stroke="#666" stroke-width="1.200"/><use href="#plus" x="8" y="8" width="8" height="8"/></svg></span>
  </footer>
</div>

<section class="lesson">
  <div class="ltabs"><span class="t1">Context</span><b class="t2">Instructions</b><span class="t3">Help</span><span class="min"><svg width="11" height="8" viewBox="0 0 11 8"><path d="M1 1.500l4.500 4.700L10 1.500" fill="none" stroke="#05192d" stroke-width="1.700"/></svg><span>Minimize</span></span></div>
  <div class="steps"><i>1</i><i>2</i><i>3</i><i>4</i><i class="on">5</i></div>
  <h4 class="q1">How does "Theater on the Lake" rank?</h4>
  <div class="input">14</div>
  <h4 class="q2">How many trips occurred there in Winter?</h4>
  <div class="input">366</div>
  <div class="actions"><span class="hint">Hint</span><span class="video">Rewatch Video<svg width="17" height="12" viewBox="0 0 17 12"><path d="M1 1h10v10H1zM11 5l4.800-3.500v9L11 7" fill="none" stroke="#05192d" stroke-width="1.800"/></svg></span><span class="submit">Submit</span></div>
</section>
</body>
</html>
```
FILE: styles.css
```css
* { box-sizing: border-box; }
body { margin: 0; width: 1767px; height: 877px; overflow: hidden; background: #f7f7fc; position: relative; font: 12px/1.2 "Open Sans", "Noto Sans", sans-serif; color: #222; white-space: nowrap; }
svg { display: block; flex: none; }
.defs { position: absolute; }
h1, h2, h3, h4, p, hr { margin: 0; }
i { font-style: normal; }

.embed-stub { height: 3px; width: 231px; margin: 0 0 11px 779px; display: flex; border: 2px solid #858bb0; border-top: 0; border-radius: 0 0 4px 4px; }
.embed-stub i { border-right: 2px solid #858bb0; width: 36px; height: 2px; }
.embed-stub i + i { width: 158px; }
.embed-stub i:last-child { border: 0; }

.window { margin-left: 8px; height: 863px; border-left: 1px solid #dfe2e4; background: #fff; display: flex; flex-direction: column; }
.titlebar { height: 24px; display: flex; align-items: flex-start; padding: 3px 0 0 2px; font: 12px/17px "Noto Sans", sans-serif; color: #000; }
.title { margin-left: 6px; letter-spacing: -.4px; }
.winctl { margin: -3px 0 0 auto; }
.menu { height: 19px; display: flex; font: 12px/19px "Noto Sans", sans-serif; color: #000; padding-left: 8px; }
.menu span { letter-spacing: -.25px; }
.m1 { width: 34px; } .m2 { width: 40px; } .m3 { width: 72px; } .m4 { width: 73px; } .m5 { width: 43px; } .m6 { width: 59px; } .m7 { width: 40px; } .m8 { width: 54px; } .m9 { width: 48px; } .m10 { width: 60px; }
.toolbar { height: 42px; flex: none; background: #f5faf7; border-bottom: 1px solid #d5dad7; display: flex; justify-content: space-between; }
.showme-tab { width: 101px; height: 37px; margin: 5px 0 -1px; background: #fff; border: 1px solid #e0e4e2; border-width: 1px 0 0 1px; display: flex; padding: 7px 0 0 11px; gap: 6px; font: 14px/16px Roboto, sans-serif; letter-spacing: -.3px; color: #333; }

.body { display: flex; height: 746px; background: #f5faf7; }
.side { width: 210px; background: #fff; border-right: 1px solid #d5dad7; display: flex; flex-direction: column; }
.tabs { display: flex; height: 26px; font-size: 12.500px; line-height: 25px; }
.tabs b { width: 77px; padding-left: 18px; color: #000; font-weight: 600; letter-spacing: .2px; }
.tabs span { flex: 1; border: 1px solid #d5dad7; border-width: 0 0 1px 1px; padding: 0 7px 0 13px; display: flex; justify-content: space-between; align-items: center; color: #333; letter-spacing: .15px; }
.source { height: 30px; border-bottom: 1px solid #e3e6e4; display: flex; align-items: center; padding: 0 0 2px 19px; gap: 6px; color: #555; }
.source span { letter-spacing: .25px; }
.searchrow { display: flex; align-items: center; height: 24px; margin: 7px 0 0 8px; }
.search { width: 130px; height: 23px; border: 1px solid #c6cac8; border-radius: 2px; display: flex; align-items: center; justify-content: space-between; padding: 0 6px; color: #9a9a9a; }
.search svg { color: #555; }
.funnel { margin: 0 6px 0 4px; }
.searchrow i { width: 1px; height: 18px; background: #d5dad7; margin-right: 6px; }
.dd { margin-left: 8px; color: #555; }
h2 { font-size: 12.500px; font-weight: 600; line-height: 32px; height: 30px; padding-left: 18px; color: #000; letter-spacing: .2px; }
.scrollarea { display: flex; justify-content: space-between; flex: 1; }
.list { width: 190px; }
.group { height: 21px; display: flex; align-items: center; padding: 0 0 1px 8px; color: #000; }
.group svg + svg { margin: 0 12px 0 8px; }
.group b { font-weight: 600; font-size: 12.500px; letter-spacing: -.2px; }
.second { margin-top: 9px; }
.f { height: 21px; display: flex; align-items: center; padding: 0 0 1px 30px; line-height: 20px; letter-spacing: -.05px; }
.f i { width: 28px; margin-right: 4px; display: flex; justify-content: center; position: relative; font-size: 9.500px; font-weight: 600; font-family: "Noto Sans", sans-serif; padding-top: 1px; }
.f em { letter-spacing: .5px; }
.d i { color: #2e7491; } .g i { color: #3aa679; }
.c i::before { content: "="; position: absolute; left: 4px; font-size: 8px; top: -3px; }
.w i::before { left: 2px; top: 0; }
hr { border: 0; height: 1px; background: #dcdfdd; margin: 1px -2px 0 30px; width: 156px; }
.scroll { width: 15px; margin-right: 1px; background: #f7f7f7; display: flex; flex-direction: column; align-items: center; padding: 6px 0; height: 629px; }
.thumb { width: 15px; height: 545px; margin: 5px 0 auto; background: #cccfcd; flex: none; }

.cards { width: 154px; margin-left: 6px; display: flex; flex-direction: column; gap: 6px; }
.card { background: #fff; border: 1px solid #d5dad7; padding: 0 6px; }
h3 { font-weight: 400; font-size: 12px; color: #444; line-height: 16px; padding-top: 7px; letter-spacing: .1px; }
.pages { height: 61px; border-top: 0; }
.filters { height: 78px; }
.marks { height: 264px; }
.pill { height: 20px; border-radius: 10px; color: #fff; padding: 0 11px; line-height: 19px; font-size: 12px; display: flex; justify-content: space-between; align-items: center; letter-spacing: .2px; }
.card .pill { letter-spacing: .5px; padding-left: 10px; }
.green { background: #1fb585; } .blue { background: #4b96b2; }
.filters .pill { margin: 9px -2px 0; }
.select { height: 21px; border: 1px solid #c6cac8; border-radius: 2px; margin-top: 13px; display: flex; align-items: center; padding-left: 13px; gap: 7px; color: #444; }
.select i { margin-left: auto; width: 18px; height: 19px; border-left: 1px solid #d5dad7; display: grid; place-items: center; }
.buttons { display: grid; grid-template-columns: 43px 42px 43px; gap: 6px; margin: 6px 0 8px; }
.buttons div { height: 42px; border: 1px solid #d0d4d2; display: flex; flex-direction: column; align-items: center; justify-content: space-between; padding: 6px 0 2px; font-size: 9.700px; color: #444; }
.mrow { display: flex; align-items: center; justify-content: space-between; margin: 0 4px 3px 6px; }
.mrow .pill { width: 111px; }

.work { width: 1188px; margin-left: 6px; display: flex; flex-direction: column; gap: 6px; }
.shelf { height: 28px; background: #fff; border: 1px solid #d5dad7; border-right: 0; display: flex; align-items: center; gap: 2px; }
.shelf:first-child { border-top: 0; height: 27px; }
.shelf label { width: 125px; height: 100%; border-right: 1px solid #d5dad7; display: flex; align-items: center; gap: 8px; padding-left: 6px; color: #444; }
.shelf .pill { width: 148px; padding-left: 10px; }
.view { height: 673px; border: 1px solid #b3b8b5; border-right: 0; background: #fff; }
h1 { font-size: 20px; font-weight: 300; letter-spacing: .25px; height: 44px; line-height: 49px; padding-left: 11px; color: #333; }
.map { position: relative; margin-left: 5px; width: 1182px; height: 621px; }
.casing { stroke: #fbfcfb; } .core { stroke: #dce0dd; }
.r, .h, .nv path { vector-effect: non-scaling-stroke; }
.mapsvg .casing { stroke-width: 3.600px; } .mapsvg .core { stroke-width: 1.700px; }
.mapsvg text { font: 700 8px "Noto Sans", sans-serif; fill: #fff; text-anchor: middle; }
.mapsvg .city { font: 23px "Noto Sans", sans-serif; fill: #686b69; text-anchor: start; }
.h { stroke-width: 6px; } .h2 { stroke-width: 5px; }
.ctl { position: absolute; left: 10px; width: 28px; background: rgba(255,255,255,.85); border: 1px solid #b0b5b2; color: #555; }
.one { top: 9px; height: 28px; display: grid; place-items: center; }
.two { top: 46px; height: 110px; }
.two svg { margin: -1px; }
.attrib { position: absolute; left: 2px; bottom: 3px; background: #fff; font: 11px/16px "Liberation Sans", sans-serif; padding: 0 3px; width: 177px; color: #555; }
.tooltip { position: absolute; left: 602px; top: 55px; width: 321px; height: 384px; background: #fff; border: 1px solid #cfd5d2; box-shadow: 2px 2px 3px rgba(0,0,0,.3); }
.tt { text-align: center; line-height: 18px; height: 63px; padding-top: 8px; color: #888; font-size: 12.200px; letter-spacing: .3px; }
.tt b { font-weight: 600; color: #333; letter-spacing: .2px; }
.lab text { font: 12px "Open Sans", sans-serif; fill: #777; }
.lab .dk { fill: #333; font-weight: 600; font-size: 11.500px; } .lab .bk { fill: #222; }
.axis { display: flex; position: absolute; left: 96px; top: 310px; width: 204px; justify-content: space-between; color: #777; font-size: 11.500px; }
.axtitle { position: absolute; left: 160px; top: 334px; font-size: 12px; color: #333; }

.showme { width: 194px; background: #fff; border-left: 1px solid #d5dad7; padding: 14px 0 0 13px; }
.grid { display: grid; grid-template-columns: repeat(3, 56px); gap: 4px; width: 176px; }
.grid svg { width: 56px; height: 42px; border: 1px solid #e3e3e3; border-radius: 1px; overflow: hidden; }
.grid .sel { border: 2px solid #dd6d3a; fill: #dfdfdf; }
.filled { fill: #f9d8d4; }
.num { font: 17px "Open Sans", sans-serif; fill: #d5dad7; }
p { font-size: 12px; margin-top: 17px; padding-left: 2px; line-height: 18px; color: #333; }
p b { font-weight: 600; color: #000; }
.need { display: flex; align-items: center; height: 28px; padding-left: 2px; color: #333; }
p + .need { margin-top: 2px; }
.need svg { margin: 0 6px 0 7px; color: #555; }
.p1 { width: 84px; } .p2 { width: 90px; margin-left: 3px; } .p3 { width: 72px; margin-left: 39px; }

.sheets { height: 31px; flex: none; background: #e5eae6; border-top: 1px solid #ccd0cd; border-bottom: 1px solid #ccd0cd; display: flex; color: #666; font-size: 12px; line-height: 30px; }
.sheets span { border-right: 1px solid #c6cac8; }
.ds { width: 131px; display: flex; align-items: center; padding-left: 9px; gap: 6px; }
.s2 { width: 157px; padding-left: 6px; }
.s3 { width: 105px; background: #fff; border-bottom: 4px solid #6b5b7b; padding-left: 5px; font-weight: 600; line-height: 27px; color: #444; letter-spacing: .2px; }
.new { width: 32px; display: grid; place-items: center; }

.lesson { position: absolute; left: 1363px; top: 576px; width: 404px; height: 301px; background: #fff; border-radius: 3px 0 0 0; overflow: hidden; box-shadow: 0 0 3px rgba(5,25,45,.2); font-family: Lato, sans-serif; color: #05192d; font-size: 15px; }
.ltabs { height: 32px; display: flex; line-height: 31px; background: #e8e7ee; }
.t1 { width: 82px; padding-left: 14px; } .t2 { width: 107px; background: #fff; padding-left: 15px; font-size: 14.800px; } .t3 { padding-left: 15px; }
.min { margin: 0 9px 0 auto; display: flex; align-items: center; gap: 11px; }
.steps { display: flex; gap: 12px; margin: 12px 0 0 12px; width: 198px; background: linear-gradient(#e8e7ee, #e8e7ee) 0 15px / 100% 1px no-repeat; }
.steps i { width: 30px; height: 30px; border-radius: 50%; background: #e8e7ee; display: grid; place-items: center; }
.steps .on { background: #04061c; color: #fff; }
h4 { font-size: 14.500px; line-height: 18px; margin: 15px 12px 13px; letter-spacing: .2px; }
.input { height: 48px; margin: 0 6px 0 12px; border: 2px solid #e1e0e6; border-radius: 3px; padding-left: 14px; line-height: 44px; font-size: 16px; }
.q2 { margin: 5px 12px 12px; }
.actions { display: flex; margin: 16px 6px 0 12px; font-weight: 700; font-size: 14.600px; }
.actions span { height: 40px; border-radius: 3px; line-height: 33px; display: flex; justify-content: center; }
.hint { width: 90px; border: 2px solid #05192d; margin-right: 29px; } .video { width: 157px; border: 2px solid #05192d; gap: 8px; } .video svg { margin-top: 11px; }
.submit { width: 80px; background: #2eef6e; padding-top: 2px; margin-left: auto; }
```
